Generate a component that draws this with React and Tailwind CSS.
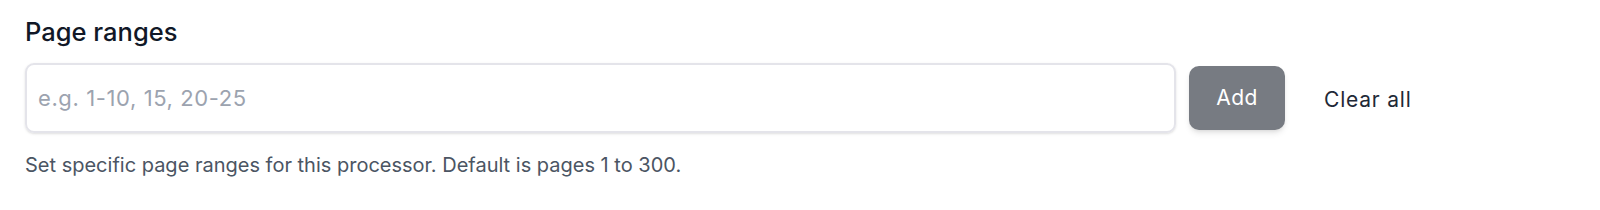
import React, { useState } from 'react';

// --- Main Component ---
const App = () => {
    const [value, setValue] = useState('');

    return (
        <div className="bg-white w-[1600px] h-[210px] pl-[25px] pt-4 font-['Inter','Liberation_Sans',sans-serif]">
            <h3 className="text-[25.5px] leading-[32px] font-medium text-[#111827]">Page ranges</h3>

            <div className="mt-[15px] flex items-center">
                <input
                    type="text"
                    value={value}
                    onChange={(e) => setValue(e.target.value)}
                    placeholder="e.g. 1-10, 15, 20-25"
                    className="w-[1151px] h-[70px] px-[11px] rounded-[9px] border-2 border-[#e4e4ea] shadow-sm text-[22px] tracking-[0.6px] text-[#111827] placeholder:text-[#9ca3af] outline-none"
                />
                <button className="ml-[13px] w-[96px] h-[64px] rounded-[10px] bg-[#777b82] text-white text-[21px] tracking-[0.5px] shadow-md">
                    Add
                </button>
                <button className="ml-[39px] mt-[3px] text-[21px] tracking-[0.8px] text-[#1f2937]">Clear all</button>
            </div>

            <p className="mt-[18px] text-[20px] leading-[28px] text-[#4b5563]">
                Set specific page ranges for this processor. Default is pages 1 to 300.
            </p>
        </div>
    );
};

export default App;
